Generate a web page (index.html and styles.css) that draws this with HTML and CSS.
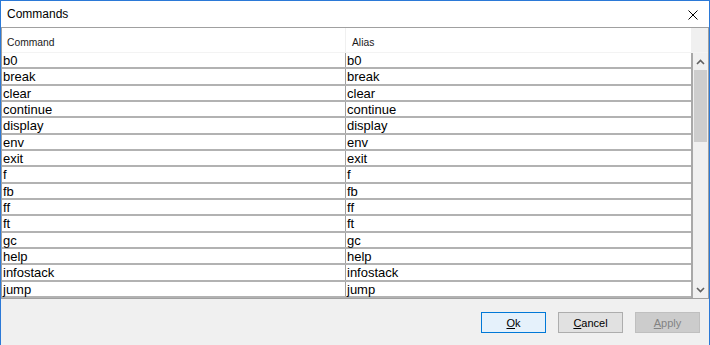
FILE: index.html
```html
<!DOCTYPE html>
<html lang="en">
<head>
  <meta charset="UTF-8" />
  <title>Commands</title>
  <link rel="stylesheet" href="styles.css">
</head>
<body>
  <div class="window">
    <div class="titlebar">
      <span class="title">Commands</span>
      <svg class="close" width="10" height="10" viewBox="0 0 10 10">
        <path d="M0.5 0.5 L9.5 9.5 M9.5 0.5 L0.5 9.5" stroke="#000" stroke-width="1" fill="none"/>
      </svg>
    </div>

    <div class="grid">
      <div class="grid-head">
        <div class="cell head-cmd">Command</div>
        <div class="cell head-alias">Alias</div>
        <div class="corner"></div>
      </div>
      <div class="grid-body">
        <div class="rows">
          <div class="row"><div class="cell">b0</div><div class="cell alias">b0</div></div>
          <div class="row"><div class="cell">break</div><div class="cell alias">break</div></div>
          <div class="row"><div class="cell">clear</div><div class="cell alias">clear</div></div>
          <div class="row"><div class="cell">continue</div><div class="cell alias">continue</div></div>
          <div class="row"><div class="cell">display</div><div class="cell alias">display</div></div>
          <div class="row"><div class="cell">env</div><div class="cell alias">env</div></div>
          <div class="row"><div class="cell">exit</div><div class="cell alias">exit</div></div>
          <div class="row"><div class="cell">f</div><div class="cell alias">f</div></div>
          <div class="row"><div class="cell">fb</div><div class="cell alias">fb</div></div>
          <div class="row"><div class="cell">ff</div><div class="cell alias">ff</div></div>
          <div class="row"><div class="cell">ft</div><div class="cell alias">ft</div></div>
          <div class="row"><div class="cell">gc</div><div class="cell alias">gc</div></div>
          <div class="row"><div class="cell">help</div><div class="cell alias">help</div></div>
          <div class="row"><div class="cell">infostack</div><div class="cell alias">infostack</div></div>
          <div class="row"><div class="cell">jump</div><div class="cell alias">jump</div></div>
        </div>
        <div class="scrollbar">
          <div class="arrow">
            <svg width="9" height="6" viewBox="0 0 9 6"><path d="M1 5 L4.5 1.5 L8 5" stroke="#606060" stroke-width="1.6" fill="none"/></svg>
          </div>
          <div class="track"><div class="thumb"></div></div>
          <div class="arrow">
            <svg width="9" height="6" viewBox="0 0 9 6"><path d="M1 1 L4.5 4.5 L8 1" stroke="#606060" stroke-width="1.6" fill="none"/></svg>
          </div>
        </div>
      </div>
    </div>

    <div class="buttons">
      <button class="btn default"><u>O</u>k</button>
      <button class="btn"><u>C</u>ancel</button>
      <button class="btn" disabled><u>A</u>pply</button>
    </div>
  </div>
</body>
</html>
```

FILE: styles.css
```css
* {
  box-sizing: border-box;
}

body {
  margin: 0;
  background: #f0f0f0;
  font-family: "Liberation Sans", Arial, sans-serif;
  color: #000;
}

.window {
  width: 710px;
  height: 345px;
  border: 1px solid #2b79d7;
  border-bottom: none;
  background: #f0f0f0;
  display: flex;
  flex-direction: column;
}

.titlebar {
  height: 26px;
  background: #fff;
  display: flex;
  align-items: center;
  justify-content: space-between;
  padding: 0 11px 0 6px;
  font-size: 12px;
}

.close {
  display: block;
  margin-top: 2px;
}

.grid {
  border: 1px solid #a0a0a0;
  background: #fff;
}

.grid-head {
  height: 25px;
  display: flex;
  font-size: 10.3px;
  color: #1a1a1a;
  border-bottom: 1px solid #f3f3f3;
}

.grid-head .cell {
  padding-top: 9px;
}

.head-cmd {
  width: 344px;
  padding-left: 5px;
  border-right: 1px solid #f0f0f0;
}

.head-alias {
  flex: 1;
  padding-left: 6px;
}

.corner {
  width: 17px;
  background: #f0f0f0;
}

.grid-body {
  display: flex;
  height: 245px;
}

.rows {
  flex: 1;
}

.row {
  display: flex;
  height: 16.33px;
  border-bottom: 2px solid #b2b2b2;
  font-size: 13px;
  line-height: 14px;
}

.row .cell {
  width: 344px;
  padding: 1px 0 0 1px;
  border-right: 1px solid #a0a0a0;
  white-space: nowrap;
}

.row .cell.alias {
  flex: 1;
  width: auto;
  border-right: none;
}

.scrollbar {
  width: 17px;
  background: #f0f0f0;
  border-left: 2px solid #a8a8a8;
  display: flex;
  flex-direction: column;
}

.arrow {
  height: 17px;
  display: flex;
  align-items: center;
  justify-content: center;
}

.track {
  flex: 1;
  padding: 0 1px;
}

.thumb {
  height: 72px;
  background: #cdcdcd;
}

.buttons {
  display: flex;
  justify-content: flex-end;
  gap: 12px;
  padding: 13px 9px 0 0;
}

.btn {
  width: 65px;
  height: 21px;
  font-family: "Liberation Sans", Arial, sans-serif;
  font-size: 11px;
  color: #000;
  background: #e1e1e1;
  border: 1px solid #adadad;
  padding: 0;
}

.btn.default {
  background: #e5f1fb;
  border-color: #0078d7;
}

.btn:disabled {
  background: #cccccc;
  border-color: #bfbfbf;
  color: #838383;
}
```
